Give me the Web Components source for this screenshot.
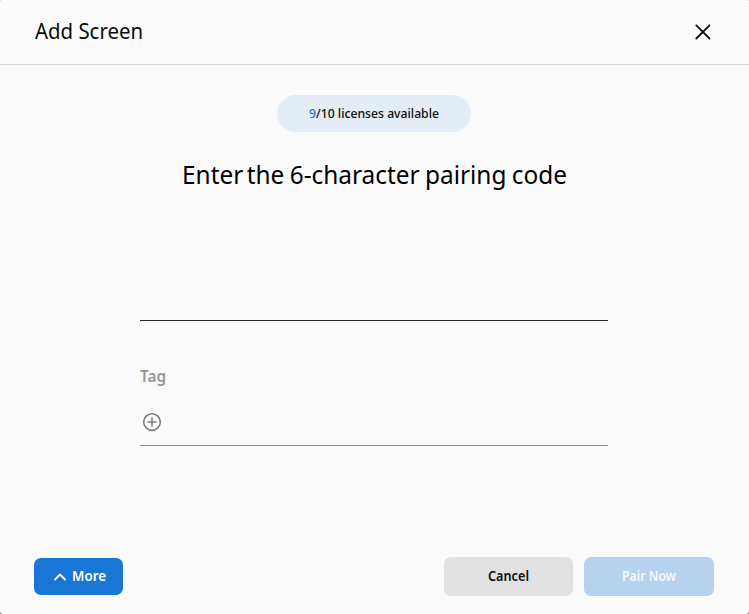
<!DOCTYPE html>
<html lang="en">
<head>
<meta charset="utf-8">
<title>Add Screen</title>
<style>
html,body{margin:0;height:100%;overflow:hidden;background:#777}
body{font-family:"Noto Sans","Open Sans",sans-serif;color:#0c0c0c}
</style>
</head>
<body>
<pairing-dialog></pairing-dialog>
<script>
// A single line of text condensed to the width given in its "width" attribute.
class FitText extends HTMLElement {
  connectedCallback() {
    const w = +this.getAttribute('width');
    const root = this.attachShadow({mode: 'open'});
    root.innerHTML = `<style>
      :host{display:block;flex:none;white-space:nowrap;width:${w}px}
      span{display:inline-block;transform-origin:0 50%}
    </style><span><slot></slot></span>`;
    const span = root.querySelector('span');
    const natural = span.getBoundingClientRect().width;
    if (natural) span.style.transform = `scaleX(${w / natural})`;
  }
}

class DialogHeader extends HTMLElement {
  constructor() {
    super();
    this.attachShadow({mode: 'open'}).innerHTML = `<style>
      :host{display:flex;box-sizing:border-box;height:65px;padding:0 38px 1px 35px;justify-content:space-between;align-items:center;border-bottom:1px solid #d9d9d9;font-size:22px;line-height:30px}
      .title{padding-bottom:4px}
      svg{display:block}
    </style><div class="title"><slot></slot></div>
    <svg width="16" height="16" viewBox="0 0 16 16" fill="none" stroke="#111" stroke-width="1.8" stroke-linecap="round"><path d="M1.3 1.3 14.5 14.5M14.5 1.3 1.3 14.5"/></svg>`;
  }
}

class LicensePill extends HTMLElement {
  constructor() {
    super();
    this.attachShadow({mode: 'open'}).innerHTML = `<style>
      :host{display:flex;box-sizing:border-box;width:194px;height:37px;padding-bottom:2px;border-radius:19px;background:#e4ecf6;align-items:center;justify-content:center;font-size:13px;line-height:18px;font-weight:500}
    </style><slot></slot>`;
  }
}

class CodeField extends HTMLElement {
  constructor() {
    super();
    this.attachShadow({mode: 'open'}).innerHTML = `<style>
      :host{display:block;box-sizing:border-box;width:468px;height:130px;border-bottom:1px solid #252525}
    </style>`;
  }
}

class TagField extends HTMLElement {
  constructor() {
    super();
    this.attachShadow({mode: 'open'}).innerHTML = `<style>
      :host{display:flex;flex-direction:column;box-sizing:border-box;width:468px;height:125px;padding-top:44px;border-bottom:1px solid #8c8c8c}
      .label{font-size:16px;line-height:22px;font-weight:600;color:#959595}
      svg{display:block;margin:25px 0 0 2px}
    </style><div class="label"><slot></slot></div>
    <svg width="20" height="20" viewBox="0 0 20 20" fill="none" stroke="#777" stroke-width="1.5"><circle cx="10" cy="10" r="8.3"/><path d="M10 5.5v9M5.5 10h9"/></svg>`;
  }
}

class DialogButton extends HTMLElement {
  constructor() {
    super();
    this.attachShadow({mode: 'open'}).innerHTML = `<style>
      :host{display:flex;box-sizing:border-box;width:129px;height:39px;padding-bottom:2px;border-radius:7px;align-items:center;justify-content:center;background:#e1e1e1;font-size:14px;line-height:20px;font-weight:600}
      :host([kind=primary]){background:#b6d2ef;color:#f5f9fe;width:130px}
      :host([kind=more]){background:#1976d5;color:#fff;width:89px;height:37px;margin-right:auto;gap:6px;padding-left:3px}
    </style><slot name="icon"></slot><slot></slot>`;
  }
}

class ChevronUp extends HTMLElement {
  constructor() {
    super();
    this.attachShadow({mode: 'open'}).innerHTML = `<style>:host,svg{display:block}</style>
    <svg width="12" height="10" viewBox="0 0 12 10" fill="none" stroke="#fff" stroke-width="1.8" stroke-linecap="round" stroke-linejoin="round"><path d="M1 8.5 6 3.5l5 5"/></svg>`;
  }
}

class PairingDialog extends HTMLElement {
  constructor() {
    super();
    this.attachShadow({mode: 'open'}).innerHTML = `<style>
      :host{display:flex;flex-direction:column;box-sizing:border-box;width:749px;height:614px;background:#fafafa;border-radius:1px 1px 3px 3px}
      main{display:flex;flex-direction:column;align-items:center;padding:30px 1px 0 0;flex:1}
      h1{margin:25px 0 0;font-size:25px;line-height:34px;font-weight:400;color:#000;word-spacing:-1px}
      .first{word-spacing:-3px}
      b{font-weight:inherit;color:#1976d5}
      footer{display:flex;align-items:center;padding:0 35px 18px 34px;gap:11px}
    </style>
    <dialog-header><fit-text width="108">Add Screen</fit-text></dialog-header>
    <main>
      <license-pill><fit-text width="130"><b>9</b>/10 licenses available</fit-text></license-pill>
      <h1><fit-text width="385"><span class="first">Enter </span>the 6-character pairing code</fit-text></h1>
      <code-field></code-field>
      <tag-field><fit-text width="26">Tag</fit-text></tag-field>
    </main>
    <footer>
      <dialog-button kind="more"><chevron-up slot="icon"></chevron-up><fit-text width="34">More</fit-text></dialog-button>
      <dialog-button><fit-text width="41">Cancel</fit-text></dialog-button>
      <dialog-button kind="primary"><fit-text width="54">Pair Now</fit-text></dialog-button>
    </footer>`;
  }
}

customElements.define('dialog-header', DialogHeader);
customElements.define('license-pill', LicensePill);
customElements.define('code-field', CodeField);
customElements.define('tag-field', TagField);
customElements.define('dialog-button', DialogButton);
customElements.define('chevron-up', ChevronUp);
customElements.define('pairing-dialog', PairingDialog);
customElements.define('fit-text', FitText);
</script>
</body>
</html>
